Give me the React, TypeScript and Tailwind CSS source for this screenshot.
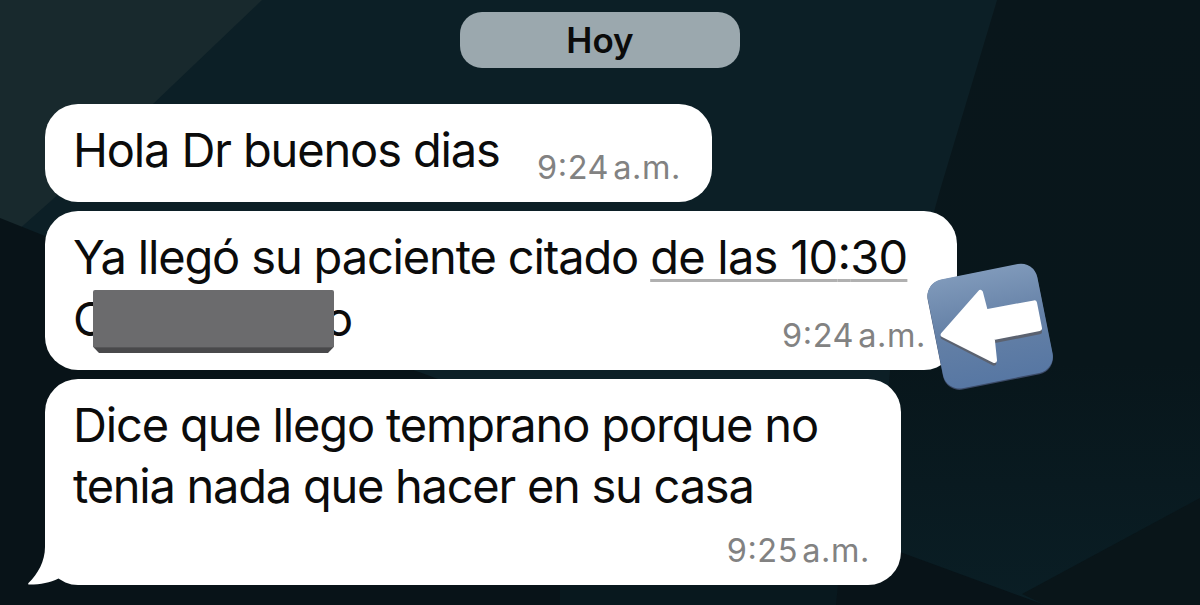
import React from 'react';

interface TimeProps {
  hour: string;
  minutes: string;
  className?: string;
}

// Colon raised to sit centred between the digits
function Colon() {
  return <span className="[font-feature-settings:'case']">:</span>;
}

function Time({ hour, minutes, className = '' }: TimeProps) {
  return (
    <span className={`-mr-px text-[32.5px] leading-10 tracking-[0.6px] text-[#828282] whitespace-nowrap ${className}`}>
      {hour}
      <Colon />
      {minutes}
      <span className="ml-1">a.m.</span>
    </span>
  );
}

function Wallpaper() {
  return (
    <svg className="absolute inset-0 w-full h-full" viewBox="0 0 1200 605" preserveAspectRatio="none">
      <defs>
        <linearGradient id="shade" x1="0" y1="0" x2="0" y2="1">
          <stop offset="0" stopColor="#09161b" />
          <stop offset="0.6" stopColor="#08161b" />
          <stop offset="1" stopColor="#0a1e25" />
        </linearGradient>
      </defs>
      <rect width="1200" height="605" fill="#0c1f26" />
      <polygon points="0,0 262,0 153,104 52,200 0,246" fill="#18292d" />
      <polygon points="997,0 1200,0 1200,605 870,605 890,370 940,190" fill="url(#shade)" />
      <polygon points="0,218 45,236 430,376 900,552 1045,605 0,605" fill="#081318" />
      <polygon points="560,585 838,585 836,605 560,605" fill="#08181e" />
      <polygon points="1200,498 1200,605 1045,605 1022,594" fill="#091519" />
    </svg>
  );
}

function Tail() {
  return (
    <svg className="absolute left-[-17px] bottom-0 w-[50px] h-[50px]" viewBox="0 0 50 50">
      <path d="M17 0V12C17 26 10 39 0.5 48Q-0.5 49.7 1.5 49.6C13 49.5 22 47.5 30.5 43.5L45 20V0Z" fill="#fff" />
    </svg>
  );
}

function ArrowSticker() {
  return (
    <svg className="absolute left-[900px] top-[240px] w-[180px] h-[170px]" viewBox="0 0 540 510">
      <defs>
        <linearGradient id="tile" x1="0" y1="0" x2="0" y2="1">
          <stop offset="0" stopColor="#7f99ba" />
          <stop offset="0.5" stopColor="#6480a6" />
          <stop offset="1" stopColor="#5777a3" />
        </linearGradient>
      </defs>
      <rect x="103" y="94" width="335" height="335" rx="50" fill="#3b4a67" transform="rotate(-11.3 270.5 261.5)" />
      <rect x="103" y="92" width="335" height="333" rx="50" fill="url(#tile)" transform="rotate(-11.3 270.5 258)" />
      <g strokeWidth="16" strokeLinejoin="round">
        <path d="M130 291L240 166L255 224L402 197L418 275L276 303L281 369Z" fill="#5b6270" stroke="#5b6270" />
        <path d="M130 284L241 158L256 216L403 189L418 265L276 293L283 361Z" fill="#fff" stroke="#fff" />
      </g>
    </svg>
  );
}

export default function App() {
  return (
    <div className="relative w-[1200px] h-[605px] overflow-hidden font-['Inter',sans-serif] text-[#0b0b0b]">
      <Wallpaper />

      <div className="relative flex flex-col h-full pt-3">
        <div className="self-center w-[280px] h-14 rounded-[22px] bg-[#9ba8ae] flex items-center justify-center">
          <span className="text-[35px] font-semibold">Hoy</span>
        </div>

        <div className="mt-9 pl-[45px] flex flex-col items-start gap-[9px] text-[47px] leading-[61px]">
          <div className="w-[667px] h-[98px] rounded-[33px] bg-white pl-7 pr-8 pt-[15px] flex justify-between">
            <p className="whitespace-nowrap tracking-[-1.13px]">Hola Dr buenos dias</p>
            <Time hour="9" minutes="24" className="mt-[29px]" />
          </div>

          <div className="w-[912px] h-[159px] rounded-[33px] bg-white pl-7 pr-8 pt-[15px] flex flex-col">
            <p className="whitespace-nowrap tracking-[-1.15px]">
              Ya llegó su paciente citado{' '}
              <span className="tracking-[-0.75px] underline decoration-[#b0b0b0] decoration-[3px] underline-offset-[5px] [text-decoration-skip-ink:none]">
                de las 10
                <Colon />
                30
              </span>
            </p>
            <div className="flex justify-between">
              <div className="flex">
                <span className="w-5 mt-px">C</span>
                <span className="relative z-10 mt-[3px] w-[241px] h-[63px] rounded-[2px] bg-linear-to-b from-[#6b6b6d] from-90% to-[#49494b] to-92% [clip-path:polygon(0_0,100%_0,100%_90%,97.5%_100%,2.5%_100%,0_90%)]" />
                <span className="-ml-[9px] mt-px">o</span>
              </div>
              <Time hour="9" minutes="24" className="mt-[29px]" />
            </div>
          </div>

          <div className="relative w-[856px] h-[206px] rounded-[33px] bg-white pl-7 pr-8 pt-[15px] flex flex-col">
            <p className="whitespace-nowrap tracking-[-1.15px]">
              Dice que llego temprano porque no
              <br />
              <span className="tracking-[-1.25px]">tenia nada que hacer en su casa</span>
            </p>
            <Time hour="9" minutes="25" className="self-end mt-[15px]" />
            <Tail />
          </div>
        </div>
      </div>

      <ArrowSticker />
    </div>
  );
}
